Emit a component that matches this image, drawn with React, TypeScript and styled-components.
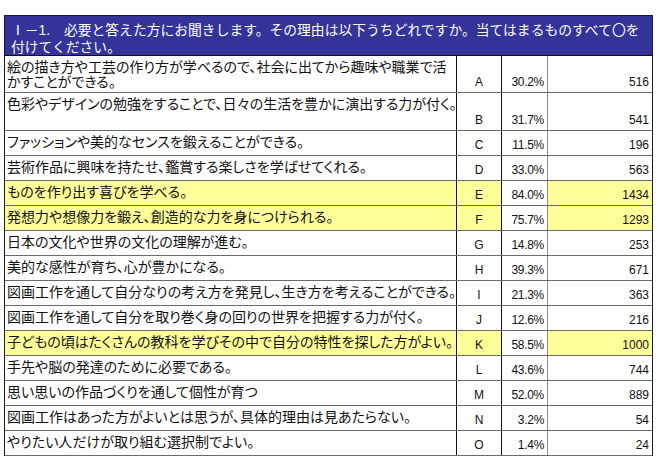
import React from "react";
import styled, { createGlobalStyle } from "styled-components";

const Global = createGlobalStyle`
  html, body { margin: 0; padding: 0; background: #fff; }
  body { font-family: "Liberation Sans", "Noto Sans CJK JP", sans-serif; }
`;

const Page = styled.div`
  padding: 15px 0 0 4px;
`;

const Table = styled.div`
  width: 649px;
  box-sizing: border-box;
  border: 1px solid #1a1a1a;
  border-bottom: none;
  display: flex;
  flex-direction: column;
`;

const Header = styled.div`
  height: 40px;
  box-sizing: border-box;
  background: #333399;
  border-bottom: 1px solid #111;
  color: #fff;
  font-family: "Liberation Sans", "Noto Sans CJK JP", sans-serif;
  font-size: 13.8px;
  line-height: 16.5px;
  padding: 7px 0 0 6px;
  white-space: nowrap;
`;

const Row = styled.div<{ $tall?: number }>`
  display: grid;
  grid-template-columns: 452px 45px 46px 104px;
  height: ${(p) => p.$tall ?? 25}px;
  box-sizing: border-box;
  border-bottom: 1px solid #6a6a6a;
`;

const Cell = styled.div<{ $hl?: boolean }>`
  background: ${(p) => (p.$hl ? "#ffff99" : "#fff")};
  box-sizing: border-box;
  min-width: 0;
`;

const Desc = styled(Cell)`
  border-right: 1px solid #111;
  font-family: "Liberation Sans", "Noto Sans CJK JP", sans-serif;
  font-size: 14px;
  line-height: 15px;
  padding: 4px 0 0 2px;
  color: #111;
  font-feature-settings: "palt";
  white-space: nowrap;
`;

const NumCell = styled(Cell)<{ $align: "center" | "right" }>`
  display: flex;
  align-items: flex-end;
  justify-content: ${(p) => (p.$align === "center" ? "center" : "flex-end")};
  padding: 0 3px 3px 0;
  font-family: "Liberation Sans", Arial, sans-serif;
  font-size: 12px;
  line-height: 14px;
  color: #111;
`;

const Letter = styled(NumCell)`
  border-right: 1px solid #111;
  padding-right: 0;
`;

const Pct = styled(NumCell)`
  border-right: 1px solid #8a8a8a;
  letter-spacing: -0.3px;
`;

type Item = {
  text: React.ReactNode;
  key: string;
  pct: string;
  n: number;
  hl?: boolean;
  h?: number;
};

const rows: Item[] = [
  {
    text: (
      <>
        絵の描き方や工芸の作り方が学べるので、社会に出てから趣味や職業で活
        <br />
        かすことができる。
      </>
    ),
    key: "A",
    pct: "30.2%",
    n: 516,
    h: 37,
  },
  {
    text: "色彩やデザインの勉強をすることで、日々の生活を豊かに演出する力が付く。",
    key: "B",
    pct: "31.7%",
    n: 541,
    h: 38,
  },
  { text: "ファッションや美的なセンスを鍛えることができる。", key: "C", pct: "11.5%", n: 196 },
  { text: "芸術作品に興味を持たせ、鑑賞する楽しさを学ばせてくれる。", key: "D", pct: "33.0%", n: 563 },
  { text: "ものを作り出す喜びを学べる。", key: "E", pct: "84.0%", n: 1434, hl: true },
  { text: "発想力や想像力を鍛え、創造的な力を身につけられる。", key: "F", pct: "75.7%", n: 1293, hl: true },
  { text: "日本の文化や世界の文化の理解が進む。", key: "G", pct: "14.8%", n: 253 },
  { text: "美的な感性が育ち、心が豊かになる。", key: "H", pct: "39.3%", n: 671 },
  { text: "図画工作を通して自分なりの考え方を発見し、生き方を考えることができる。", key: "I", pct: "21.3%", n: 363 },
  { text: "図画工作を通して自分を取り巻く身の回りの世界を把握する力が付く。", key: "J", pct: "12.6%", n: 216 },
  { text: "子どもの頃はたくさんの教科を学びその中で自分の特性を探した方がよい。", key: "K", pct: "58.5%", n: 1000, hl: true },
  { text: "手先や脳の発達のために必要である。", key: "L", pct: "43.6%", n: 744 },
  { text: "思い思いの作品づくりを通して個性が育つ", key: "M", pct: "52.0%", n: 889 },
  { text: "図画工作はあった方がよいとは思うが、具体的理由は見あたらない。", key: "N", pct: "3.2%", n: 54 },
  { text: "やりたい人だけが取り組む選択制でよい。", key: "O", pct: "1.4%", n: 24 },
];

export default function App() {
  return (
    <Page>
      <Global />
      <Table>
        <Header>
          Ⅰ－1.　必要と答えた方にお聞きします。その理由は以下うちどれですか。当てはまるものすべて〇を
          <br />
          付けてください。
        </Header>
        {rows.map((r) => (
          <Row key={r.key} $tall={r.h}>
            <Desc $hl={r.hl}>{r.text}</Desc>
            <Letter $hl={r.hl} $align="center">{r.key}</Letter>
            <Pct $align="right">{r.pct}</Pct>
            <NumCell $hl={r.hl} $align="right">{r.n}</NumCell>
          </Row>
        ))}
      </Table>
    </Page>
  );
}
